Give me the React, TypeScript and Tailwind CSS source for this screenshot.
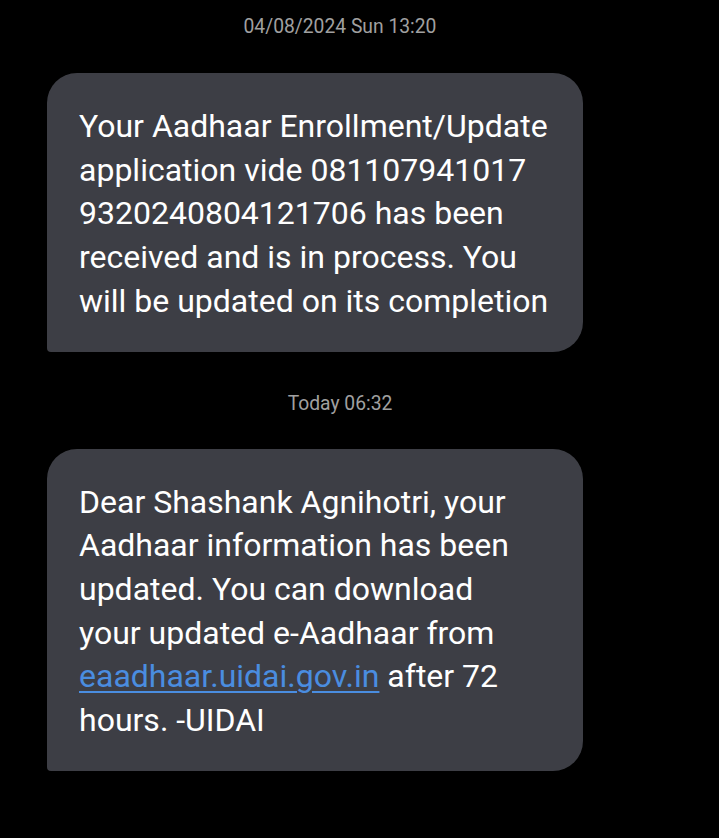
import React from 'react';

const Stamp = ({ text }: { text: string }) => (
  <div className="text-center text-[19.3px] leading-[24px] text-[#a0a0a0]">{text}</div>
);

const Bubble = ({ children }: { children: React.ReactNode }) => (
  <div className="w-[536px] rounded-[30px] rounded-bl-[4px] bg-[#3d3e45] pl-[32px] pr-[16px] pt-[32px] pb-[28px] text-[32px] leading-[43.7px] text-white">
    {children}
  </div>
);

export default function App() {
  return (
    <div className="min-h-[838px] bg-black pl-[47px] pt-[15px] font-['Roboto',sans-serif]">
      <div className="w-[586px]">
        <Stamp text="04/08/2024 Sun 13:20" />
      </div>
      <div className="mt-[34px]">
        <Bubble>
          Your Aadhaar Enrollment/Update
          <br />
          application vide 081107941017
          <br />
          9320240804121706 has been
          <br />
          received and is in process. You
          <br />
          will be updated on its completion
        </Bubble>
      </div>
      <div className="mt-[40px] w-[586px]">
        <Stamp text="Today 06:32" />
      </div>
      <div className="mt-[33px]">
        <Bubble>
          Dear Shashank Agnihotri, your
          <br />
          Aadhaar information has been
          <br />
          updated. You can download
          <br />
          your updated e-Aadhaar from
          <br />
          <a className="text-[#4a8de0] underline underline-offset-[4px] decoration-[2px]">eaadhaar.uidai.gov.in</a> after 72
          <br />
          hours. -UIDAI
        </Bubble>
      </div>
    </div>
  );
}
